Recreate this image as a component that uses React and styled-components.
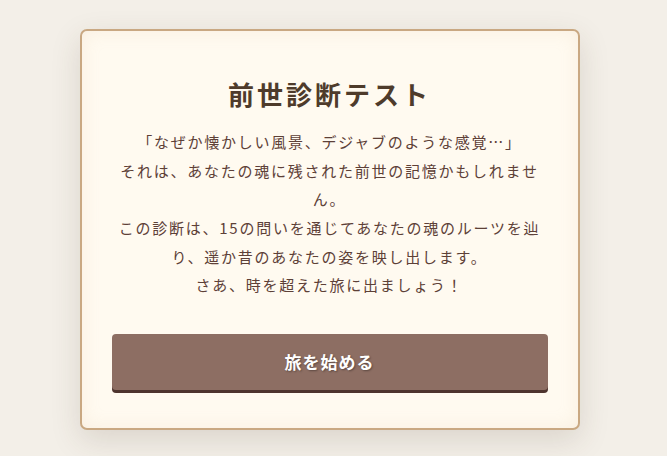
import React from "react";
import styled, { createGlobalStyle } from "styled-components";

const GlobalStyle = createGlobalStyle`
  html, body {
    margin: 0;
    padding: 0;
    background-color: #f3efe8;
    font-family: "Noto Sans CJK JP", "Noto Sans", sans-serif;
  }
`;

const Page = styled.div`
  min-height: 100vh;
  display: flex;
  align-items: center;
  justify-content: center;
  box-sizing: border-box;
  padding: 3px 8px 0 0;
`;

const Card = styled.div`
  width: 500px;
  box-sizing: border-box;
  padding: 45px 30px 38px;
  background-color: #fffaf0;
  border: 2px solid #c9a882;
  border-radius: 7px;
  box-shadow: 0 10px 30px rgba(80, 60, 40, 0.15),
    inset 0 0 18px rgba(220, 190, 150, 0.18);
  display: flex;
  flex-direction: column;
  align-items: stretch;
`;

const Title = styled.h1`
  margin: 0 0 16px;
  text-align: center;
  font-size: 26px;
  line-height: 36px;
  letter-spacing: 3px;
  font-weight: 700;
  color: #4e3b2b;
`;

const Intro = styled.div`
  padding: 0 3px;
  text-align: center;
  font-size: 15px;
  line-height: 28.6px;
  letter-spacing: 1.75px;
  color: #5d4037;
`;

const Line = styled.p`
  margin: 0;
`;

const StartButton = styled.button`
  margin-top: 34px;
  height: 56px;
  border: none;
  border-radius: 4px;
  background-color: #8d6e63;
  box-shadow: 0 3px 0 #4e342e;
  color: #ffffff;
  font-family: inherit;
  font-size: 17px;
  font-weight: 700;
  letter-spacing: 1px;
  text-shadow: 1px 1px 2px rgba(0, 0, 0, 0.35);
  cursor: pointer;
`;

const lines = [
  "「なぜか懐かしい風景、デジャブのような感覚…」",
  "それは、あなたの魂に残された前世の記憶かもしれません。",
  "この診断は、15の問いを通じてあなたの魂のルーツを辿り、遥か昔のあなたの姿を映し出します。",
  "さあ、時を超えた旅に出ましょう！",
];

const App = () => {
  return (
    <>
      <GlobalStyle />
      <Page>
        <Card>
          <Title>前世診断テスト</Title>
          <Intro>
            {lines.map((text, i) => (
              <Line key={i}>{text}</Line>
            ))}
          </Intro>
          <StartButton>旅を始める</StartButton>
        </Card>
      </Page>
    </>
  );
};

export default App;
